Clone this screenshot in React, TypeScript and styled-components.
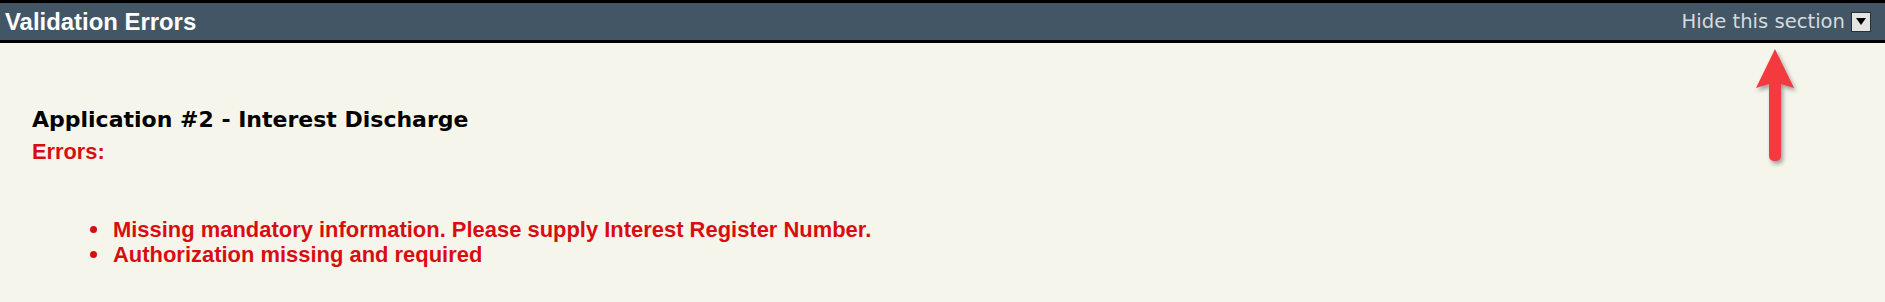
import styled, { createGlobalStyle } from 'styled-components';

const GlobalStyle = createGlobalStyle`
  html, body {
    margin: 0;
    padding: 0;
    background: #f5f5eb;
  }
`;

const Page = styled.div`
  position: relative;
  min-height: 100vh;
  display: flex;
  flex-direction: column;
  background: #f5f5eb;
`;

const SectionHeader = styled.div`
  display: flex;
  justify-content: space-between;
  align-items: center;
  height: 37px;
  padding: 0 14px 0 5px;
  background: #435665;
  border-top: 3px solid #000;
  border-bottom: 3px solid #000;
`;

const SectionTitle = styled.h2`
  margin: 0;
  font-family: 'Liberation Sans', Arial, sans-serif;
  font-weight: bold;
  font-size: 23.9px;
  line-height: 1;
  color: #fff;
`;

const ToggleLink = styled.a`
  display: flex;
  align-items: center;
  gap: 6px;
  font-family: 'DejaVu Sans', Verdana, sans-serif;
  font-size: 19.6px;
  line-height: 1;
  color: #d6dbde;
  text-decoration: none;
  cursor: pointer;
`;

const ToggleIcon = styled.span`
  display: flex;
  align-items: center;
  justify-content: center;
  width: 20px;
  height: 20px;
  box-sizing: border-box;
  background: #e4e4e2;
  border: 1px solid #2a2f33;
`;

const SectionBody = styled.div`
  flex: 1;
  padding: 66px 32px 30px;
`;

const ApplicationTitle = styled.h3`
  margin: 0;
  font-family: 'DejaVu Sans', Verdana, sans-serif;
  font-weight: bold;
  font-size: 22px;
  line-height: 1;
  color: #000;
`;

const ErrorsLabel = styled.div`
  margin-top: 10px;
  font-family: 'Liberation Sans', Arial, sans-serif;
  font-weight: bold;
  font-size: 21.8px;
  line-height: 1;
  color: #d90d10;
`;

const ErrorList = styled.ul`
  list-style: none;
  margin: 54px 0 0;
  padding: 0 0 0 58px;
`;

const ErrorItem = styled.li`
  display: flex;
  align-items: center;
  font-family: 'Liberation Sans', Arial, sans-serif;
  font-weight: bold;
  font-size: 21.95px;
  line-height: 25px;
  color: #d90d10;
`;

const Bullet = styled.span`
  flex: none;
  width: 7px;
  height: 7px;
  margin-right: 16px;
  border-radius: 50%;
  background: #d90d10;
`;

const Annotation = styled.svg`
  position: absolute;
  left: 1750px;
  top: 44px;
  filter: drop-shadow(2px 3px 2px rgba(0, 0, 0, 0.35));
`;

const errors = [
  'Missing mandatory information. Please supply Interest Register Number.',
  'Authorization missing and required',
];

export default function App() {
  return (
    <Page>
      <GlobalStyle />
      <SectionHeader>
        <SectionTitle>Validation Errors</SectionTitle>
        <ToggleLink>
          Hide this section
          <ToggleIcon>
            <svg width="10" height="7" viewBox="0 0 10 7">
              <path d="M0 0 H10 L5 7 Z" fill="#000" />
            </svg>
          </ToggleIcon>
        </ToggleLink>
      </SectionHeader>
      <SectionBody>
        <ApplicationTitle>Application #2 - Interest Discharge</ApplicationTitle>
        <ErrorsLabel>Errors:</ErrorsLabel>
        <ErrorList>
          {errors.map((e) => (
            <ErrorItem key={e}>
              <Bullet />
              {e}
            </ErrorItem>
          ))}
        </ErrorList>
      </SectionBody>
      <Annotation width="52" height="124" viewBox="0 0 52 124">
        <path
          d="M25 5 L44 44 L31 40 L31 112 Q31 117 25 117 Q19 117 19 112 L19 40 L6 44 Z"
          fill="#f23a3f"
        />
      </Annotation>
    </Page>
  );
}
